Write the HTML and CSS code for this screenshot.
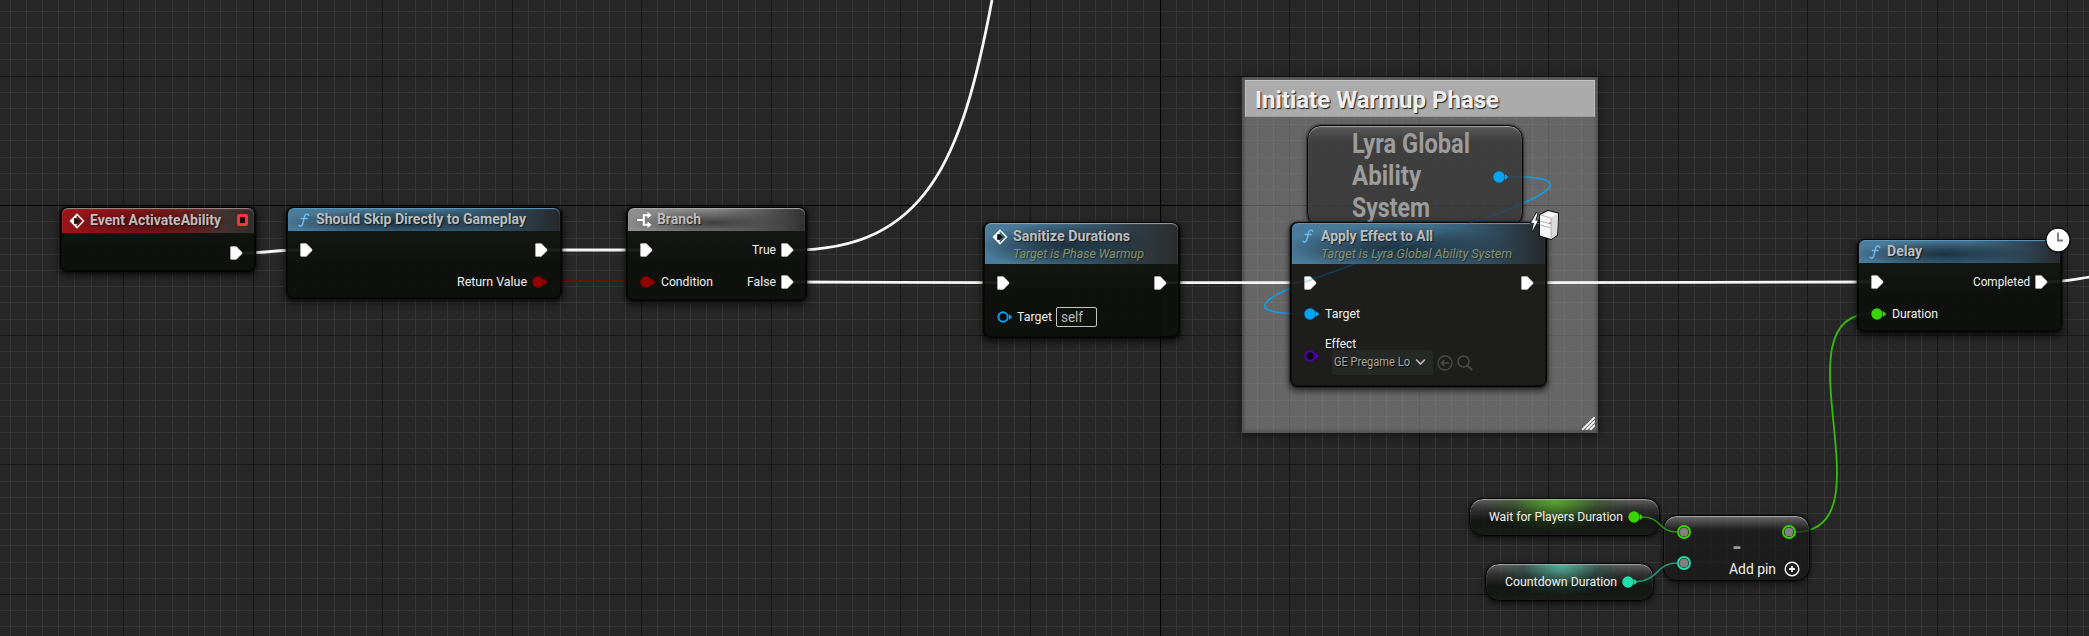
FILE: index.html
```html
<!DOCTYPE html>
<html lang="en">
<head>
<meta charset="utf-8">
<title>Event Graph</title>
<link rel="stylesheet" href="styles.css">
</head>
<body>
<svg width="0" height="0" class="defs">
  <defs>
    <symbol id="exec" viewBox="0 0 13 14"><path d="M.5 1.2Q.5.5 1.2.5H6.3L12 6.3V7.7L6.3 13.5H1.2Q.5 13.5.5 12.8Z" fill="#fff" stroke="#bdbdbd" stroke-width=".5"/></symbol>
    <symbol id="pin" viewBox="0 0 16 12"><circle cx="6" cy="6" r="5.7" fill="currentColor"/><path d="M12 3 15.4 6 12 9Z" fill="currentColor"/></symbol>
    <symbol id="ring" viewBox="0 0 16 12"><circle cx="6" cy="6" r="4.7" fill="#050a0e" stroke="currentColor" stroke-width="1.9"/><path d="M12 3 15.2 6 12 9Z" fill="currentColor"/></symbol>
    <symbol id="dot" viewBox="0 0 14 14"><circle cx="7" cy="7" r="6" fill="#0d120b" stroke="currentColor" stroke-width="1.9"/><circle cx="7" cy="7" r="4.5" fill="#857f7f"/></symbol>
    <symbol id="func" viewBox="0 0 12 14"><path d="M10.6 2.3C10.3.8 7.9.4 6.9 2.5 6 4.5 5.6 8.6 4.7 11.1 4 13.3 2 13.7 1.1 12.4M3.3 5.6H9" fill="none" stroke="#6cb9ee" stroke-width="1.5" stroke-linecap="round"/></symbol>
    <symbol id="event" viewBox="0 0 16 16"><path d="M8 1.2 14.6 8 8 14.8 1.4 8Z" fill="none" stroke="#fff" stroke-width="1.3"/><path d="M7.6 1 1 8 7.6 15V10.7H5V5.3H7.6Z" fill="#fff"/><path d="M8 5.2 11 8 8 10.8H5.4V5.2Z" fill="#151515"/></symbol>
  </defs>
</svg>
<main class="graph">
  <svg class="layer" id="grid" width="2089" height="636" shape-rendering="crispEdges"></svg>

  <section class="comment">
    <h2 class="comment-title"><span class="fit" data-w="244">Initiate Warmup Phase</span></h2>
    <svg class="grip" width="13" height="13" viewBox="0 0 13 13"><path d="M0 13 13 0M4 13 13 4M8 13 13 8" stroke="#fff" stroke-width="1.8"/></svg>
  </section>

  <svg class="layer wires" width="2089" height="636" fill="none">
    <g stroke="#f6f6f6" stroke-width="2.8">
      <path d="M242 253C262 253 280 250 300 250"/>
      <path d="M547 250H641"/>
      <path d="M792 250C926 250 962 160 992 0"/>
      <path d="M792 282C850 282 940 282.7 998 282.7"/>
      <path d="M1165 282.7H1306"/>
      <path d="M1532 282.7C1600 282.7 1800 282 1873 282"/>
      <path d="M2046 282C2064 282 2076 279 2090 277"/>
    </g>
    <path d="M547 281H641" stroke="#700b0e" stroke-width="1.8"/>
    <path d="M1507 176.500C1714 176.500 1101 314 1308 314" stroke="#139ce0" stroke-width="1.8"/>
    <path d="M1795 532C1894 532 1773 313.500 1872 313.500" stroke="#35bd0b" stroke-width="1.8"/>
  </svg>

  <article class="node n-event">
    <header class="head red"><svg class="i16"><use href="#event"/></svg><span class="fit title" data-w="131">Event ActivateAbility</span><i class="delegate"></i></header>
    <div class="row"><span></span><svg class="exec"><use href="#exec"/></svg></div>
  </article>

  <article class="node n-skip">
    <header class="head blue"><svg class="fn"><use href="#func"/></svg><span class="fit title" data-w="210">Should Skip Directly to Gameplay</span></header>
    <div class="row"><svg class="exec"><use href="#exec"/></svg><svg class="exec"><use href="#exec"/></svg></div>
    <div class="row second"><span></span><span class="io"><span class="fit" data-w="70">Return Value</span><svg class="pin bool"><use href="#pin"/></svg></span></div>
  </article>

  <article class="node n-branch">
    <header class="head gray"><svg class="i16" viewBox="0 0 16 16"><path d="M0 8H6M12 3.200H6.800V12.800H12" fill="none" stroke="#fff" stroke-width="2"/><path d="M10.500 0 14.500 3.200 10.500 6.400ZM10.500 9.600 14.500 12.800 10.500 16Z" fill="#fff"/></svg><span class="fit title" data-w="44">Branch</span></header>
    <div class="row"><svg class="exec"><use href="#exec"/></svg><span class="io"><span class="fit" data-w="24">True</span><svg class="exec"><use href="#exec"/></svg></span></div>
    <div class="row second"><span class="io"><svg class="pin bool"><use href="#pin"/></svg><span class="fit" data-w="52">Condition</span></span><span class="io"><span class="fit" data-w="29">False</span><svg class="exec"><use href="#exec"/></svg></span></div>
  </article>

  <article class="node n-sanitize">
    <header class="head blue tall soft"><svg class="i16"><use href="#event"/></svg><div><div><span class="fit title" data-w="117">Sanitize Durations</span></div><div class="sub"><span class="fit" data-w="131">Target is Phase Warmup</span></div></div></header>
    <div class="row"><svg class="exec"><use href="#exec"/></svg><svg class="exec"><use href="#exec"/></svg></div>
    <div class="row second"><span class="io"><svg class="pin obj"><use href="#ring"/></svg><span class="fit" data-w="35">Target</span><span class="self"><span class="fit" data-w="22">self</span></span></span></div>
  </article>

  <article class="node glass n-lyra">
    <h3 class="lyra-name"><span class="fit" data-w="118">Lyra Global</span><span class="fit" data-w="69">Ability</span><span class="fit" data-w="78">System</span></h3>
    <svg class="pin obj"><use href="#pin"/></svg>
  </article>

  <article class="node n-apply">
    <header class="head blue tall"><svg class="fn"><use href="#func"/></svg><div><div><span class="fit title" data-w="112">Apply Effect to All</span></div><div class="sub"><span class="fit" data-w="191">Target is Lyra Global Ability System</span></div></div></header>
    <div class="row"><svg class="exec"><use href="#exec"/></svg><svg class="exec"><use href="#exec"/></svg></div>
    <div class="row target"><span class="io"><svg class="pin obj"><use href="#pin"/></svg><span class="fit" data-w="35">Target</span></span></div>
    <div class="effect">
      <svg class="pin cls"><use href="#ring"/></svg>
      <div>
        <div class="effect-name"><span class="fit" data-w="31">Effect</span></div>
        <div class="asset">
          <div class="combo"><span class="fit" data-w="76">GE Pregame Lo</span><svg width="11" height="8" viewBox="0 0 11 8"><path d="M1.200 1.500 5.500 6 9.800 1.500" fill="none" stroke="#b5b5b5" stroke-width="1.8"/></svg></div>
          <svg width="16" height="16" viewBox="0 0 16 16" fill="none" stroke="#484a48" stroke-width="1.3"><circle cx="8" cy="8" r="7"/><path d="M12 8H4.500M7.500 5 4.500 8 7.500 11" stroke-width="1.700"/></svg>
          <svg width="16" height="16" viewBox="0 0 16 16" fill="none" stroke="#484a48" stroke-width="1.500"><circle cx="6.500" cy="6.500" r="5.500"/><path d="M10.500 10.500 15.200 15.200" stroke-width="2"/></svg>
        </div>
      </div>
    </div>
  </article>
  <svg class="layer" width="2089" height="636" fill="none"><path d="M1473 222C1430 236 1390 250 1352 265L1305 282" stroke="#0b79b4" stroke-width="1.6" opacity=".3"/></svg>
  <svg class="badge server" width="32" height="32" viewBox="0 0 32 32"><path d="M6.500 3 1 13H4L2 21.500 8 10.500H5.200L7.600 3.500Z" fill="#fff" stroke="#111" stroke-width="1.600" paint-order="stroke"/><path d="M10 5 18 1 28 3.500 27 25 21 29 10 25.500Z" fill="#f8f8f8" stroke="#111" stroke-width="2" stroke-linejoin="round" paint-order="stroke"/><path d="M21 8 28 3.500 27 25 21 29Z" fill="#dcdcdc"/><path d="M10.500 5 21 8V28M10.500 11 20.500 14M10.500 15 20.500 18" stroke="#999" stroke-width=".7" fill="none"/><path d="M20 12V14" stroke="#e33" stroke-width="1"/></svg>

  <article class="node n-delay">
    <header class="head blue"><svg class="fn"><use href="#func"/></svg><span class="fit title" data-w="35">Delay</span></header>
    <div class="row"><svg class="exec"><use href="#exec"/></svg><span class="io"><span class="fit" data-w="57">Completed</span><svg class="exec"><use href="#exec"/></svg></span></div>
    <div class="row second"><span class="io"><svg class="pin num"><use href="#pin"/></svg><span class="fit" data-w="46">Duration</span></span></div>
  </article>
  <svg class="badge clock" width="28" height="28" viewBox="0 0 28 28"><circle cx="14" cy="14" r="12" fill="#fff" stroke="#0a0a0a" stroke-width="1.400"/><path d="M14 6.500V14.500H19" fill="none" stroke="#777" stroke-width="1.800"/></svg>

  <article class="node glass getter n-wait"><span class="fit" data-w="134">Wait for Players Duration</span><svg class="pin num"><use href="#pin"/></svg></article>
  <article class="node glass getter teal n-count"><span class="fit" data-w="112">Countdown Duration</span><svg class="pin int"><use href="#pin"/></svg></article>

  <article class="node glass n-minus">
    <div class="ins"><svg class="dot num"><use href="#dot"/></svg><svg class="dot int"><use href="#dot"/></svg></div>
    <b class="op">-</b>
    <div class="outs"><svg class="dot num"><use href="#dot"/></svg><div class="add"><span class="fit" data-w="47">Add pin</span><svg width="16" height="16" viewBox="0 0 16 16" fill="none" stroke="#f2f2f2" stroke-width="1.500"><circle cx="8" cy="8" r="6.800"/><path d="M8 5V11M5 8H11" stroke-width="1.800"/></svg></div></div>
  </article>
  <svg class="layer" width="2089" height="636" fill="none" stroke-width="1.600">
    <path d="M1642 517C1662 517 1658 532 1677 532" stroke="#2f8d13"/>
    <path d="M1636 581.500C1658 581.500 1656 563 1677 563" stroke="#219477"/>
  </svg>
</main>
<script src="graph.js"></script>
</body>
</html>
```

FILE: styles.css
```css
* { box-sizing: border-box; }
body { margin: 0; background: #262626; font: 13px/16px Roboto, sans-serif; color: #f0f0f0; overflow: hidden; }
h2, h3 { margin: 0; }
svg { display: block; flex: none; }
.defs { position: absolute; }
.graph { position: relative; width: 2089px; height: 636px; overflow: hidden; }
.layer { position: absolute; left: 0; top: 0; pointer-events: none; }

.fit { display: inline-block; white-space: nowrap; transform-origin: left center; }

/* Comment box */
.comment { position: absolute; left: 1242px; top: 77px; width: 356px; height: 356px; padding: 3px; background: rgba(166,166,166,.5); box-shadow: inset 0 0 4px 1px rgba(35,35,35,.55), 0 2px 9px rgba(0,0,0,.55); display: flex; flex-direction: column; justify-content: space-between; }
.comment-title { height: 37px; padding-left: 9px; background: #ababab; border: 1px solid #bdbdbd; border-top-color: #c4c4c4; border-bottom-color: #9a9a9a; font-size: 23px; font-weight: 700; line-height: 39px; color: #efefef; text-shadow: 1px 1px 1px #1c1c1c; }
.grip { align-self: flex-end; }

/* Nodes */
.node { position: absolute; border: 1px solid #050505; border-radius: 7px; background: linear-gradient(rgba(24,26,23,.93), rgba(13,15,12,.94) 60%); box-shadow: 0 0 2px #000, 0 3px 6px 1px rgba(0,0,0,.6), inset 0 0 0 1px rgba(0,0,0,.5); }
.n-event { left: 60px; top: 207px; width: 196px; height: 65px; }
.n-skip { left: 286px; top: 207px; width: 276px; height: 92px; }
.n-branch { left: 626px; top: 207px; width: 181px; height: 94px; }
.n-sanitize { left: 983px; top: 222px; width: 197px; height: 116px; }
.n-apply { left: 1290px; top: 222px; width: 257px; height: 165px; background: rgba(24,26,23,.94); }
.n-delay { left: 1857px; top: 239px; width: 205px; height: 93px; }

.head { display: flex; align-items: center; height: 23px; margin: 0 1px; border-radius: 6px 6px 0 0; color: #bdbdbd; }
.head .title { font-size: 14.500px; font-weight: 700; text-shadow: 1px 1px 1px rgba(0,0,0,.6); }
.i16 { width: 16px; height: 16px; }
.fn { width: 12px; height: 14px; }
.blue { padding-left: 10px; gap: 6px; background: radial-gradient(ellipse 46% 55% at 42% 62%, rgba(22,38,50,.85), rgba(22,38,50,.45) 55%, transparent), linear-gradient(90deg, #4b7c9b 0, #477692 25%, #416e8a 55%, #30495a 80%, #25282a); box-shadow: inset 0 1px 1px #5c99bf; }
.gray { padding-left: 9px; gap: 4px; background: radial-gradient(ellipse 50% 60% at 48% 65%, rgba(45,45,45,.8), rgba(60,60,60,.4) 55%, transparent), linear-gradient(90deg, #8e8e8e, #858585 50%, #4a4a4a 85%, #303030); box-shadow: inset 0 1px 1px #aaa; }
.red { height: 25px; padding: 1px 6px 0 7px; gap: 5px; background: radial-gradient(ellipse 45% 65% at 45% 60%, rgba(60,10,10,.75), rgba(60,10,10,.3) 60%, transparent), linear-gradient(90deg, #9a1517, #8d1618 40%, #6c2222 65%, #453330 82%, #2b2e2b); box-shadow: inset 0 1px 1px #a58989; }
.delegate { width: 11px; height: 12px; margin: -2px 0 0 auto; border: 3px solid #f63338; border-radius: 2px; background: #250000; }
.tall { height: 41px; align-items: flex-start; padding-top: 6px; }
.tall .sub { margin-top: 1px; font-style: italic; color: #879170; text-shadow: 1px 1px 1px rgba(0,0,0,.4); }
.tall .fn { margin-top: 0; }
.n-apply .head { gap: 7px; }
.soft { padding-left: 7px; gap: 5px; background: radial-gradient(ellipse 46% 55% at 42% 55%, rgba(22,38,50,.85), rgba(22,38,50,.45) 55%, transparent), linear-gradient(90deg, #4b7c9b 0, #477692 25%, #3c6178 50%, #2f3d46 75%, #2b2d2d); box-shadow: inset 0 1px 1px #8fa5b3; }

.row { display: flex; align-items: center; justify-content: space-between; height: 38px; padding: 0 12px 0 13px; }
.io { display: flex; align-items: center; gap: 5px; }
.exec { width: 13px; height: 14px; }
.pin { width: 16px; height: 12px; }
.dot { width: 14px; height: 14px; }
.bool { color: #930000; }
.obj { color: #00a4f2; }
.cls { color: #5500b0; }
.num { color: #38d500; }
.int { color: #1fe0ad; }
.second { height: 25px; }
.n-skip .row { padding-right: 13px; }
.n-event .row { height: 40px; }
.n-branch .second { height: 26px; }
.n-sanitize .second { height: 30px; }
.n-sanitize .second .io { gap: 4px; }
.n-delay .row { padding-left: 13px; padding-right: 13px; }
.self { width: 41px; height: 20px; padding-left: 4px; border: 1px solid #c6c6c6; border-radius: 2px; color: #b9b9b9; line-height: 18px; font-size: 14px; }
.n-apply .row { padding-left: 13px; }
.n-apply .target { height: 24px; }
.effect { display: flex; gap: 5px; padding: 8px 0 0 13px; }
.effect .pin { margin-top: 16px; }
.effect-name { height: 16px; padding-top: 2px; }
.asset { display: flex; align-items: center; gap: 4px; margin-left: 7px; }
.combo { display: flex; align-items: center; justify-content: space-between; width: 101px; height: 25px; padding: 0 7px 1px 2px; border-radius: 3px; background: #262826; color: #a8a8a8; font-size: 12px; text-shadow: 1px 1px 0 #000; }

/* Compact, translucent nodes */
.glass { border-radius: 14px; background: linear-gradient(rgba(120,120,120,.8), rgba(65,65,65,.65) 9px, rgba(25,25,25,.72) 14px, rgba(22,24,22,.76)); box-shadow: inset 0 1px 1px rgba(190,190,190,.75), 0 0 2px #000, 0 3px 6px rgba(0,0,0,.5); }
.n-lyra { left: 1307px; top: 125px; width: 216px; height: 102px; display: flex; justify-content: space-between; padding: 2px 13px 0 44px; background: linear-gradient(rgba(90,90,90,.9), rgba(52,52,52,.78) 14px, rgba(48,48,48,.78)); }
.lyra-name { display: flex; flex-direction: column; align-items: flex-start; font-size: 27px; line-height: 32px; color: #9c9c9c; }
.n-lyra .pin { margin-top: 43px; }
.getter { display: flex; align-items: center; justify-content: space-between; height: 38px; padding: 0 15px 0 19px; background: radial-gradient(ellipse 38% 85% at 45% 5%, rgba(88,175,40,.9), rgba(45,95,25,.4) 60%, transparent), linear-gradient(rgba(115,115,115,.75), rgba(55,55,55,.65) 10px, rgba(15,18,15,.85) 22px, rgba(22,24,22,.8)); }
.teal { background: radial-gradient(ellipse 38% 85% at 45% 5%, rgba(80,180,155,.9), rgba(35,90,75,.4) 60%, transparent), linear-gradient(rgba(115,115,115,.75), rgba(55,55,55,.65) 10px, rgba(15,18,15,.85) 22px, rgba(22,24,22,.8)); }
.n-wait { left: 1469px; top: 498px; width: 191px; }
.n-count { left: 1485px; top: 563px; width: 169px; }
.n-minus { left: 1663px; top: 515px; width: 147px; height: 66px; display: flex; justify-content: space-between; padding: 9px 9px 0 13px; }
.ins { display: flex; flex-direction: column; gap: 17px; }
.op { margin: 10px -26px 0 0; font: 700 24px/24px Roboto, sans-serif; color: #9b9b9b; transform: translateX(14px); }
.outs { display: flex; flex-direction: column; align-items: flex-end; }
.outs .dot { margin-right: 4px; }
.add { display: flex; align-items: center; gap: 8px; height: 18px; margin-top: 21px; font-size: 15px; }

.badge { position: absolute; }
.server { left: 1530px; top: 210px; }
.clock { left: 2044px; top: 226px; }
```

FILE: graph.js
```js
// Grid: minor lines every 1/8 of a major cell, darker major lines, black axes.
const grid = document.getElementById('grid');
const STEP = 129.57 / 8;
function lines(origin, axis, limit, vertical) {
  for (const kind of ['minor', 'major', 'axis']) {
    let d = '';
    for (let k = -80; k < 160; k++) {
      const p = Math.floor(origin + k * STEP) + 0.5;
      if (p < 0 || p > limit) continue;
      const type = k === axis ? 'axis' : k % 8 === 0 ? 'major' : 'minor';
      if (type === kind) d += vertical ? `M${p} 0V636` : `M0 ${p}H2089`;
    }
    const path = document.createElementNS('http://www.w3.org/2000/svg', 'path');
    path.setAttribute('d', d);
    path.setAttribute('stroke', { minor: '#353535', major: '#161616', axis: '#000' }[kind]);
    grid.appendChild(path);
  }
}
lines(123.48, 64, 2089, true);
lines(205.7, 0, 636, false);
// major lines stay above the minor ones
[...grid.children].filter(p => p.getAttribute('stroke') !== '#353535').forEach(p => grid.appendChild(p));

// Condense labels to their slot width.
document.querySelectorAll('.fit').forEach(el => {
  const natural = el.getBoundingClientRect().width;
  const w = +el.dataset.w;
  el.style.marginRight = (w - natural) + 'px';
  el.style.transform = `scaleX(${w / natural})`;
});
```
